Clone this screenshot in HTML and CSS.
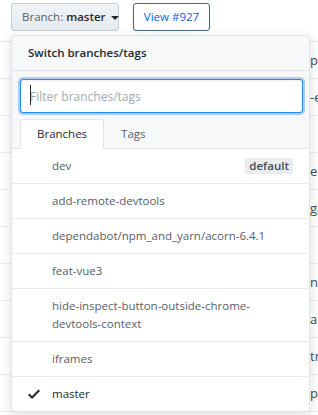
FILE: index.html
```html
<!DOCTYPE html>
<html>
<head>
<meta charset="utf-8">
<link rel="stylesheet" href="styles.css">
</head>
<body>
<div class="toolbar">
  <button class="btn btn-branch"><span class="lbl">Branch:</span> <span class="cur">master</span><span class="caret"></span></button>
  <button class="btn btn-view">View #927</button>
</div>

<div class="files">
  <div class="frow">pe</div>
  <div class="frow">-e</div>
  <div class="frow"></div>
  <div class="frow">e</div>
  <div class="frow">ga</div>
  <div class="frow"></div>
  <div class="frow">n</div>
  <div class="frow">a</div>
  <div class="frow">tr</div>
  <div class="frow">p</div>
</div>

<div class="menu">
  <div class="menu-title">Switch branches/tags</div>
  <div class="menu-filters">
    <div class="filter-wrap">
      <input class="filter" type="text" placeholder="Filter branches/tags">
      <span class="text-caret"></span>
    </div>
    <div class="tabs">
      <div class="tab active">Branches</div>
      <div class="tab">Tags</div>
    </div>
  </div>
  <div class="list">
    <div class="item"><span class="name">dev</span><span class="badge">default</span></div>
    <div class="item"><span class="name">add-remote-devtools</span></div>
    <div class="item"><span class="name">dependabot/npm_and_yarn/acorn-6.4.1</span></div>
    <div class="item"><span class="name">feat-vue3</span></div>
    <div class="item"><span class="name">hide-inspect-button-outside-chrome-devtools-context</span></div>
    <div class="item"><span class="name">iframes</span></div>
    <div class="item selected">
      <svg class="check" viewBox="0 0 12 16" width="12" height="16"><path d="M12 5l-8 8-4-4 1.5-1.5L4 10l6.5-6.5L12 5z"/></svg>
      <span class="name">master</span>
    </div>
  </div>
</div>
</body>
</html>
```

FILE: styles.css
```css
* { box-sizing: border-box; }
html, body { margin: 0; padding: 0; background: #fff; }
body {
  font-family: "Open Sans", "Noto Sans", sans-serif;
  font-size: 11.5px;
  color: #24292e;
  width: 318px;
  height: 415px;
  overflow: hidden;
  position: relative;
}

.toolbar {
  display: flex;
  gap: 14px;
  padding: 3px 0 0 11px;
}
.btn {
  font-family: inherit;
  font-size: 11.5px;
  line-height: 18px;
  height: 28px;
  padding: 4px 10px;
  border-radius: 3px;
  display: flex;
  align-items: center;
  margin: 0;
  white-space: nowrap;
}
.btn-branch {
  background: linear-gradient(#eff3f6, #e6ebf1);
  border: 1px solid #c9ccd0;
  color: #24292e;
  width: 108px;
}
.btn-branch .lbl { color: #586069; }
.btn-branch .cur { font-weight: 600; margin-left: 3px; }
.btn-branch .caret {
  margin-left: 5px;
  margin-top: 2px;
  border-top: 4px solid #24292e;
  border-left: 4px solid transparent;
  border-right: 4px solid transparent;
}
.btn-view {
  background: #fff;
  border: 1px solid #46627c;
  color: #0366d6;
  width: 77px;
  padding: 4px 6px;
  justify-content: center;
}

.files {
  margin: 10px 0 0 0;
  border-top: 1px solid #e1e4e8;
}
.frow {
  height: 37px;
  line-height: 36px;
  border-bottom: 1px solid #eaecef;
  padding-left: 310px;
  font-size: 13px;
  color: #444d56;
  white-space: nowrap;
}

.menu {
  position: absolute;
  left: 11px;
  top: 35px;
  width: 299px;
  background: #fff;
  border: 1px solid #e1e4e8;
  border-radius: 3px;
  box-shadow: 0 3px 12px rgba(27,31,35,0.15);
  overflow: hidden;
}
.menu-title {
  padding: 8px 16px;
  line-height: 18px;
  font-weight: 600;
  background: #f6f8fa;
  border-bottom: 1px solid #e1e4e8;
}
.menu-filters {
  background: #f6f8fa;
  border-bottom: 1px solid #e1e4e8;
}
.filter-wrap {
  position: relative;
  padding: 8px 6px 0 8px;
}
.filter {
  display: block;
  width: 100%;
  height: 34px;
  padding: 6px 9px;
  font-family: inherit;
  font-size: 12px;
  border: 1px solid #2188ff;
  border-radius: 3px;
  outline: none;
  box-shadow: inset 0 1px 2px rgba(27,31,35,0.075), 0 0 0 2px rgba(3,102,214,0.3);
  background: #fff;
  color: #24292e;
}
.filter::placeholder { color: #a3aab1; }
.text-caret {
  position: absolute;
  left: 18px;
  top: 14px;
  width: 1px;
  height: 20px;
  background: #24292e;
}
.tabs {
  display: flex;
  padding: 6px 8px 0 8px;
  margin-bottom: -1px;
}
.tab {
  padding: 5px 16px;
  line-height: 18px;
  color: #586069;
  border: 1px solid transparent;
  border-bottom: 0;
  border-radius: 3px 3px 0 0;
}
.tab.active {
  background: #fff;
  color: #24292e;
  border-color: #e1e4e8;
  padding-bottom: 6px;
}

.list { background: #fff; }
.item {
  display: flex;
  align-items: flex-start;
  position: relative;
  padding: 8px 16px 8px 40px;
  line-height: 18px;
  border-bottom: 1px solid #eaecef;
  color: #586069;
}
.item:last-child { border-bottom: 0; }
.item .name { flex: 1; min-width: 0; max-width: 232px; }
.item.selected { color: #24292e; }
.check {
  position: absolute;
  left: 16px;
  top: 9px;
  fill: #24292e;
}
.badge {
  background: #eaecef;
  color: #444d56;
  font-weight: 600;
  font-size: 11.5px;
  line-height: 16px;
  padding: 0 4px;
  border-radius: 2px;
  margin-top: 1px;
}
```
